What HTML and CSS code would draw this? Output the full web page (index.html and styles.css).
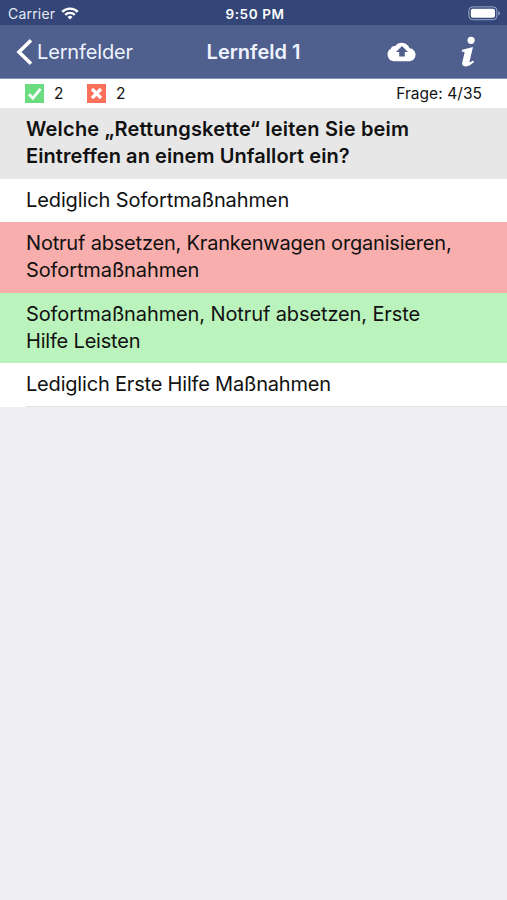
FILE: index.html
```html
<!DOCTYPE html>
<html lang="de">
<head>
<meta charset="utf-8">
<title>Lernfeld 1</title>
<link rel="stylesheet" href="styles.css">
</head>
<body>
<div class="status">
  <div class="carrier"><span>Carrier</span>
    <svg class="wifi" width="18" height="13" viewBox="0 0 18 13" fill="none" stroke="#fff" stroke-width="2.3"><path d="M1.2 4.9a11 11 0 0 1 15.6 0M4.2 7.9a6.8 6.8 0 0 1 9.6 0"/><path d="M9 12.4 6.5 9.9a3.6 3.6 0 0 1 5 0z" fill="#fff" stroke="none"/></svg>
  </div>
  <span class="time">9:50 PM</span>
  <svg class="battery" width="33" height="15" viewBox="0 0 33 15"><rect x=".9" y=".9" width="28" height="12.8" rx="3.6" fill="none" stroke="#9ba9cd"/><rect x="2.8" y="2.8" width="24.2" height="9" rx="2" fill="#fff"/><path d="M30.4 5.2c2 .7 2 3.5 0 4.2z" fill="#9ba9cd"/></svg>
</div>
<header class="nav">
  <div class="back">
    <svg width="17" height="28" viewBox="0 0 17 28" fill="none" stroke="#fff" stroke-width="3.6"><path d="M15 2.2 3 14l12 11.8"/></svg>
    <span>Lernfelder</span>
  </div>
  <h1 class="title">Lernfeld 1</h1>
  <div class="actions">
    <svg width="30" height="21" viewBox="0 0 30 21"><path d="M7 20.2a6.7 6.7 0 0 1-3.200-12.400C4.500 5.700 6.300 4.700 8.300 5.100A8.300 8.300 0 0 1 22.600 7.200a6.550 6.550 0 0 1 .4 13z" fill="#fff"/><path d="m15 4.900 6 6h-3.200v4.600h-5.600v-4.600H9z" fill="#4f5f8e"/></svg>
    <svg width="16" height="31" viewBox="0 0 16 31" fill="#fff"><circle cx="11.100" cy="4.300" r="3.600"/><path d="M2.200 13.800 13 11 9.600 25.200c-.3 1.500.5 1.600 3.400-.6l1 1.300c-3.200 3.200-6.400 4.700-8.900 4.600-2.200-.1-3.400-1.700-2.800-4.200l2.100-9.100c.3-1.400-.1-1.700-2.700-1.300z"/></svg>
  </div>
</header>
<div class="stats">
  <svg class="mark" width="19" height="19" viewBox="0 0 19 19"><rect width="19" height="19" fill="#6bdd80"/><path d="m4 10.200 3.900 4L15.500 4.800" fill="none" stroke="#fff" stroke-width="2.700"/></svg>
  <span class="count">2</span>
  <svg class="mark" width="19" height="19" viewBox="0 0 19 19"><rect width="19" height="19" fill="#fa705b"/><path d="m5 5 9 9M14 5l-9 9" fill="none" stroke="#fff" stroke-width="3.200"/></svg>
  <span class="count">2</span>
  <span class="progress">Frage: 4/35</span>
</div>
<h2 class="question"><span class="wide">Welche „Rettungskette“ leiten Sie beim</span><br>Eintreffen an einem Unfallort ein?</h2>
<ul class="answers">
  <li>Lediglich Sofortmaßnahmen</li>
  <li class="wrong"><span class="tight">Notruf absetzen, Krankenwagen organisieren,</span><br>Sofortmaßnahmen</li>
  <li class="right">Sofortmaßnahmen, Notruf absetzen, Erste<br><span class="tight">Hilfe Leisten</span></li>
  <li class="last"><span class="tight">Lediglich Erste Hilfe Maßnahmen</span></li>
</ul>
</body>
</html>
```

FILE: styles.css
```css
* { box-sizing: border-box; }
body {
  margin: 0;
  min-height: 900px;
  background: #eeeef3;
  color: #111;
  font-family: Inter, "Liberation Sans", sans-serif;
  white-space: nowrap;
}
svg { display: block; flex: none; }
.status {
  display: grid;
  grid-template-columns: 1fr auto 1fr;
  align-items: center;
  height: 25px;
  padding: 2px 6px 0 8px;
  background: #334677;
  color: #fff;
  font-size: 14px;
}
.carrier { display: flex; align-items: center; gap: 6px; color: #e4e9f5; letter-spacing: .2px; }
.time { padding-left: 1px; font-weight: 600; font-size: 13.500px; letter-spacing: .6px; }
.battery { justify-self: end; }
.nav {
  display: grid;
  grid-template-columns: 1fr auto 1fr;
  align-items: center;
  height: 54px;
  padding: 0 31px 0 16px;
  background: #4f5f8e;
  border-bottom: 1px solid #7f9abc;
  color: #eef3ff;
}
.back { display: flex; align-items: center; gap: 4px; font-size: 20px; letter-spacing: -.15px; }
.back span { padding-top: 1px; }
.title { margin: 0; padding: 1px 0 0 15px; font-size: 20px; font-weight: 600; }
.actions { display: flex; align-items: center; justify-content: flex-end; gap: 43px; }
.stats {
  display: flex;
  align-items: center;
  height: 29px;
  padding: 0 25px;
  background: #fff;
  font-size: 15.500px;
}
.count { width: 33px; padding-left: 10px; }
.count + .mark { margin-left: 10px; }
.progress { margin-left: auto; letter-spacing: .06px; }
.question {
  height: 71px;
  margin: 0;
  padding: 8px 26px;
  background: #e7e7e7;
  font-size: 20px;
  line-height: 27px;
  font-weight: 600;
  letter-spacing: .07px;
}
.question .wide { letter-spacing: .2px; }
.answers { margin: 0; padding: 0; list-style: none; font-size: 20px; line-height: 27px; letter-spacing: -.11px; }
.answers .tight { letter-spacing: -.19px; }
.answers li { padding: 8px 26px; min-height: 43px; background: #fff; }
.answers .wrong { height: 70.500px; background: #f7aeac; }
.answers .right { height: 70.500px; background: #bbf3bd; }
.answers .last { height: 43.500px; background: linear-gradient(#e2e2e6, #e2e2e6) 26px 100% / 100% 1px no-repeat #fff; }
```
